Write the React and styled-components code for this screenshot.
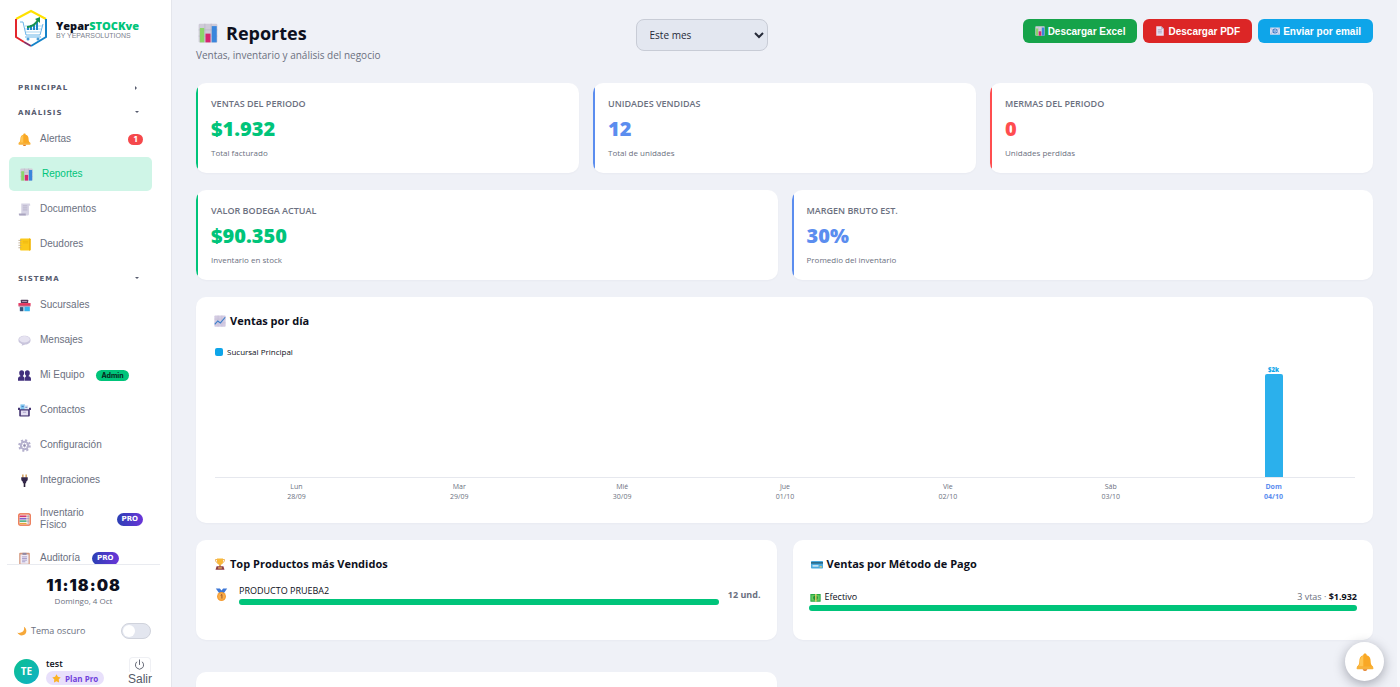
import React, { useState } from 'react';
import styled, { createGlobalStyle } from 'styled-components';
import { Power } from 'lucide-react';

const GlobalStyle = createGlobalStyle`
  :root {
    --font-ui: 'Open Sans', 'Noto Sans', sans-serif;
    --font-nav: 'Liberation Sans', Arial, sans-serif;
    --font-heavy: Inter, 'Open Sans', sans-serif;
    --font-wide: 'DejaVu Sans', Verdana, sans-serif;
    --color-green: #00c47a;
    --color-blue: #5b8def;
    --color-red: #ff4d4f;
    --color-sky: #0ea5e9;
    --color-ink: #0d1020;
    --color-muted: #6b7080;
    --color-bg: #eff1f7;
  }

  *,
  *::before,
  *::after {
    box-sizing: border-box;
  }

  body {
    margin: 0;
    background: var(--color-bg);
    color: var(--color-ink);
    font-family: var(--font-ui);
  }

  h1,
  h2,
  p,
  ul,
  ol {
    margin: 0;
    padding: 0;
  }

  ul,
  ol {
    list-style: none;
  }
`;

/* ---------- icons ---------- */

const Svg = styled.svg`
  flex: none;
  display: block;
  width: ${({ $size }) => $size}px;
  height: ${({ $size }) => $size}px;
`;

const glyphs = {
  bell: (
    <>
      <path d='M16 1c2 0 3 1 3 3 5 1 7 5 7 10 0 6 2 8 4 10v2H2v-2c2-2 4-4 4-10C6 9 8 5 13 4c0-2 1-3 3-3z' fill='#f9a825' />
      <path d='M13 5c-4 1-6 5-6 10 0 5-1 7-3 9h9z' fill='#ffc552' />
      <path d='M2 24h28l1 3c0 1-1 2-2 2H3c-1 0-2-1-2-2z' fill='#f7b23b' />
      <path d='M12 29h8c0 2-2 3-4 3s-4-1-4-3z' fill='#e37b1e' />
    </>
  ),
  chart: (
    <>
      <rect x='1' y='1' width='30' height='30' rx='2' fill='#cfcbd8' />
      <path d='M1 11h30M1 21h30M11 1v30M21 1v30' stroke='#b7b2c4' strokeWidth='1' />
      <rect x='3' y='8' width='7' height='23' fill='#8bd66a' />
      <rect x='12' y='17' width='8' height='14' fill='#d6266f' />
      <rect x='22' y='5' width='8' height='26' fill='#3a86dc' />
    </>
  ),
  scroll: (
    <>
      <path d='M8 1h20c1 0 2 1 2 3v3h-3v20c0 3-2 4-4 4H5c-2 0-3-1-3-4h6z' fill='#d6d3e4' />
      <path d='M2 26h17v2c0 2 1 3 2 3H5c-2 0-3-2-3-5z' fill='#aaa5c0' />
      <path d='M12 7h11M12 12h11M12 17h11' stroke='#b3aec6' strokeWidth='2' />
    </>
  ),
  ledger: (
    <>
      <rect x='5' y='1' width='26' height='30' rx='2' fill='#fbc91b' />
      <path d='M27 1h2c1 0 2 1 2 2v26c0 1-1 2-2 2h-2z' fill='#eeb30c' />
      <path d='M12 8h13M12 12h13' stroke='#e0a408' strokeWidth='1' />
      <path d='M1 6h7M1 12h7M1 18h7M1 24h7' stroke='#b7a58c' strokeWidth='2' />
    </>
  ),
  store: (
    <>
      <rect x='7' y='2' width='18' height='8' rx='1' fill='#51395a' />
      <path d='M10 6h12' stroke='#c9b6d0' strokeWidth='2' />
      <rect x='3' y='15' width='26' height='15' fill='#cfdce8' />
      <path d='M1 10h30v6H1z' fill='#e8365f' />
      <path d='M1 16h30v2H1z' fill='#b92850' />
      <rect x='5' y='20' width='8' height='10' fill='#36527a' />
      <rect x='16' y='19' width='13' height='11' fill='#36b3ee' />
    </>
  ),
  bubble: (
    <>
      <path d='M16 4c9 0 15 4 15 11s-6 11-13 11l-9 3 1-4C4 23 1 20 1 15 1 8 7 4 16 4z' fill='#c9c5dc' />
      <ellipse cx='16' cy='13' rx='13' ry='8' fill='#e6e3f1' />
    </>
  ),
  people: (
    <g fill='#42307d'>
      <ellipse cx='9' cy='10' rx='6' ry='7' />
      <ellipse cx='23' cy='10' rx='6' ry='7' />
      <path d='M6 14h6v4c3 1 4 3 4 6v5H0v-5c0-4 3-5 6-6z' />
      <path d='M20 14h6v4c3 1 6 2 6 6v5H17v-5c0-3 1-5 3-6z' />
    </g>
  ),
  cardbox: (
    <>
      <path d='M6 1h11v14H6z' fill='#7cc3ee' />
      <path d='M16 3h9v12h-9z' fill='#dfe3f2' />
      <path d='M9 6h5M18 8h5' stroke='#3b70b4' strokeWidth='2' />
      <path d='M0 9h5v4h22V9h5v6h-3v14c0 1-1 2-2 2H5c-1 0-2-1-2-2V15H0z' fill='#473774' />
      <path d='M7 16h18v12H7z' fill='#e4dff2' />
      <path d='M12 19h8v3h-8z' fill='#b9b0d4' />
    </>
  ),
  gear: (
    <>
      <circle cx='16' cy='16' r='13' fill='none' stroke='#b4b0cd' strokeWidth='5' strokeDasharray='5.1 5.1' />
      <circle cx='16' cy='16' r='9' fill='none' stroke='#b4b0cd' strokeWidth='5' />
      <path d='M16 8v16M9 12l14 8M23 12L9 20' stroke='#c3c0d8' strokeWidth='1.5' />
      <circle cx='16' cy='16' r='3' fill='#8e89ad' />
    </>
  ),
  plug: (
    <>
      <path d='M12 1v8M20 1v8' stroke='#c78b3a' strokeWidth='3' />
      <path d='M8 8h16v5c0 3-2 5-4 6v4h-8v-4c-2-1-4-3-4-6z' fill='#33274a' />
      <path d='M16 22v10' stroke='#2a2038' strokeWidth='4' />
    </>
  ),
  abacus: (
    <>
      <rect x='2' y='2' width='28' height='28' rx='3' fill='#fff1e8' stroke='#e8623a' strokeWidth='3' />
      <path d='M4 8h17' stroke='#d4366f' strokeWidth='4' />
      <path d='M4 14h17' stroke='#7a5fd0' strokeWidth='4' />
      <path d='M4 20h17' stroke='#4bb08a' strokeWidth='4' />
      <path d='M4 26h17' stroke='#e7a93c' strokeWidth='3' />
      <path d='M22 8h6M22 14h6M22 20h6M25 4v24' stroke='#a59ab0' strokeWidth='2' />
    </>
  ),
  clipboard: (
    <>
      <rect x='3' y='2' width='26' height='30' rx='2' fill='#d3977c' />
      <rect x='6' y='6' width='20' height='23' fill='#eeeaf5' />
      <path d='M11 2h10v5H11z' fill='#8f88a4' />
      <path d='M10 12h12M10 16h12M10 20h12M10 24h8' stroke='#9a8fc0' strokeWidth='2' />
    </>
  ),
  page: (
    <>
      <path d='M4 1h16l8 8v22H4z' fill='#e5e1f1' />
      <path d='M20 1l8 8h-8z' fill='#a7a1bb' />
      <path d='M9 12h13M9 17h13M9 22h13' stroke='#958eae' strokeWidth='2' />
    </>
  ),
  email: (
    <>
      <rect x='0' y='5' width='32' height='23' rx='2' fill='#d5dcf2' />
      <path d='M0 6l16 12L32 6M1 27l10-10M31 27L21 17' stroke='#99a5cb' strokeWidth='2' fill='none' />
      <circle cx='16' cy='16' r='8' fill='#3575c8' />
      <path d='M19 13a4 4 0 1 0 0 6M19 12v6h3' stroke='#fff' strokeWidth='2' fill='none' />
    </>
  ),
  trend: (
    <>
      <rect x='1' y='1' width='30' height='30' rx='2' fill='#d3cbe2' />
      <path d='M1 11h30M1 21h30M11 1v30M21 1v30' stroke='#bdb3d0' strokeWidth='1' />
      <path d='M2 25l8-9 7 5L30 6' stroke='#3a7fcb' strokeWidth='3' fill='none' />
    </>
  ),
  trophy: (
    <>
      <path d='M9 4H4c0 6 3 9 7 10M23 4h5c0 6-3 9-7 10' stroke='#e89b2c' strokeWidth='2' fill='none' />
      <path d='M8 1h16v8c0 6-4 9-8 9s-8-3-8-9z' fill='#f9b938' />
      <path d='M14 17h4v6h-4z' fill='#dd8a25' />
      <path d='M7 22h18l3 9H4z' fill='#8f3d44' />
      <path d='M11 25h10v3H11z' fill='#f3c15a' />
    </>
  ),
  medal: (
    <>
      <path d='M2 1h10l4 5 4-5h10l-8 11H10z' fill='#3d77d6' />
      <circle cx='16' cy='21' r='11' fill='#f59b31' />
      <circle cx='16' cy='21' r='8' fill='#fab04d' />
      <path d='M14 18l3-2v10' stroke='#8c3f1e' strokeWidth='2' fill='none' />
    </>
  ),
  card: (
    <>
      <rect x='0' y='8' width='32' height='20' rx='2' fill='#4ba9de' />
      <path d='M0 11h32v4H0z' fill='#27637f' />
      <path d='M4 19h16v4H4z' fill='#d5eaf5' />
      <path d='M23 22h6v3h-6z' fill='#f2cf5b' />
    </>
  ),
  cash: (
    <>
      <rect x='1' y='6' width='30' height='22' rx='1' fill='#27a844' />
      <rect x='4' y='9' width='24' height='16' fill='#68cd60' />
      <ellipse cx='16' cy='17' rx='7' ry='7' fill='#1d8f38' />
      <path d='M15 6h4v22h-4z' fill='#f0d467' />
    </>
  ),
  moon: (
    <path d='M22 2c3 10-2 19-17 20-2 0-3 0-4-1 3 6 8 9 14 9 9 0 15-6 15-14 0-6-3-11-8-14z' fill='#f6a83a' />
  ),
  star: (
    <path d='M16 1l5 9 10 2-7 7 1 11-9-4-9 4 1-11-7-7 10-2z' fill='#fbb224' />
  ),
};

function Emoji({ name, size = 13 }) {
  return (
    <Svg $size={size} viewBox='0 0 32 32' aria-hidden='true'>
      {glyphs[name]}
    </Svg>
  );
}

const LogoSvg = styled.svg`
  flex: none;
  width: 32px;
  height: 38px;
`;

function Logo() {
  return (
    <LogoSvg viewBox='0 0 32 38' fill='none' aria-hidden='true'>
      <path d='M1 10L16 2l15 8' stroke='#ffe100' strokeWidth='2' />
      <path d='M1 10v18l8 5' stroke='#e3262d' strokeWidth='2' />
      <path d='M9 33l7 4' stroke='#8a2f63' strokeWidth='2' />
      <path d='M31 10v18l-15 9' stroke='#1583c9' strokeWidth='2' />
      <path d='M5 13h3l3 13h14l3-11' stroke='#69b5e8' strokeWidth='1' />
      <path d='M10 17h17M10 20h16M11 23h14' stroke='#a9d5f1' strokeWidth='1' />
      <path d='M13 21v-3M16 21v-5M19 21v-6M22 21v-8' stroke='#1e87c9' strokeWidth='2' />
      <path d='M12 18c5 0 8-2 11-7' stroke='#17924e' strokeWidth='2' />
      <path d='M20 10l5-2v6z' fill='#17924e' />
      <path d='M10 28h16' stroke='#69b5e8' strokeWidth='1' />
      <circle cx='13' cy='30' r='1.5' fill='#4a9fd9' />
      <circle cx='23' cy='30' r='1.5' fill='#4a9fd9' />
    </LogoSvg>
  );
}

/* ---------- sidebar ---------- */

const Layout = styled.div`
  display: flex;
  height: 100vh;
`;

const Sidebar = styled.aside`
  flex: none;
  display: flex;
  flex-direction: column;
  width: 172px;
  background: #fff;
  border-right: 1px solid #e4e6ec;
`;

const Brand = styled.a`
  display: flex;
  align-items: center;
  gap: 9px;
  height: 79px;
  padding: 9px 15px 32px;
  color: var(--color-ink);
  text-decoration: none;
`;

const BrandText = styled.span`
  padding-top: 4px;
`;

const BrandName = styled.span`
  display: block;
  font-size: 11px;
  line-height: 12px;
  font-weight: 800;

  em {
    color: var(--color-green);
    font-style: normal;
  }
`;

const BrandBy = styled.span`
  display: block;
  font-family: var(--font-nav);
  font-size: 7px;
  line-height: 8px;
  color: #7d818e;
`;

const Nav = styled.nav`
  flex: 1;
  min-height: 0;
  overflow: hidden;
  padding: 0 19px 0 9px;
`;

const NavSection = styled.section`
  margin-bottom: 7px;
`;

const SectionToggle = styled.button`
  display: flex;
  align-items: center;
  justify-content: space-between;
  width: 100%;
  height: 18px;
  padding: 0 13px 0 9px;
  border: 0;
  background: none;
  color: #565b6e;
  font-family: var(--font-wide);
  font-size: 7px;
  font-weight: 700;
  letter-spacing: 1px;
  text-transform: uppercase;
`;

const Caret = styled.span`
  width: 0;
  height: 0;
  border: 2px solid transparent;
  border-top-color: ${({ $open }) => ($open ? '#565b6e' : 'transparent')};
  border-left-color: ${({ $open }) => ($open ? 'transparent' : '#565b6e')};
`;

const NavList = styled.ul`
  display: grid;
  gap: 1px;
  padding-bottom: 2px;
`;

const NavLink = styled.a`
  display: flex;
  align-items: center;
  min-height: 34px;
  padding: 9px;
  padding-left: ${({ $active }) => ($active ? 11 : 9)}px;
  border-radius: 5px;
  background: ${({ $active }) => ($active ? '#cff5e7' : 'transparent')};
  color: ${({ $active }) => ($active ? 'var(--color-green)' : 'var(--color-muted)')};
  font-family: var(--font-nav);
  font-size: 10px;
  line-height: 12px;
  text-decoration: none;
`;

const NavText = styled.span`
  margin-left: 9px;
`;

const CountBadge = styled.span`
  margin-left: auto;
  width: 15px;
  border-radius: 6px;
  background: #f5484b;
  color: #fff;
  font-family: var(--font-heavy);
  font-size: 8px;
  line-height: 11px;
  font-weight: 800;
  text-align: center;
`;

const TagBadge = styled.span`
  margin-left: 12px;
  padding: 0 5px;
  border-radius: 7px;
  background: ${({ $pro }) => ($pro ? 'linear-gradient(90deg, #2b3fb4, #6a35d8)' : '#00c47a')};
  color: ${({ $pro }) => ($pro ? '#fff' : '#06251a')};
  font-family: ${({ $pro }) => ($pro ? 'var(--font-wide)' : 'var(--font-heavy)')};
  font-size: 7px;
  line-height: ${({ $pro }) => ($pro ? 13 : 11)}px;
  font-weight: 700;
`;

const SidebarFooter = styled.div`
  flex: none;
  margin: 0 11px 0 7px;
  padding: 9px 0 1px;
  border-top: 1px solid #e9ebf0;
`;

const Clock = styled.p`
  font-family: var(--font-heavy);
  font-size: 16px;
  line-height: 22px;
  font-weight: 900;
  letter-spacing: 1px;
  text-align: center;
`;

const Today = styled.p`
  font-size: 8px;
  line-height: 10px;
  color: var(--color-muted);
  text-align: center;
`;

const ThemeRow = styled.label`
  display: flex;
  align-items: center;
  gap: 4px;
  margin-top: 17px;
  padding: 0 9px 0 10px;
  color: var(--color-muted);
  font-size: 9px;
  line-height: 16px;
`;

const Switch = styled.input`
  appearance: none;
  display: flex;
  align-items: center;
  width: 30px;
  height: 16px;
  margin: 0 0 0 auto;
  padding: 1px;
  border: 1px solid #d0d3dc;
  border-radius: 8px;
  background: #e3e6ef;

  &::before {
    content: '';
    width: 12px;
    height: 12px;
    border-radius: 50%;
    background: #fff;
  }

  &:checked {
    justify-content: flex-end;
    background: var(--color-green);
  }
`;

const UserRow = styled.div`
  display: flex;
  align-items: center;
  gap: 7px;
  margin-top: 17px;
  padding: 0 8px 0 7px;
  height: 30px;
`;

const Avatar = styled.span`
  flex: none;
  width: 25px;
  border-radius: 50%;
  background: linear-gradient(135deg, #0ac08f, #12b0c8);
  color: #fff;
  font-size: 10px;
  line-height: 25px;
  font-weight: 700;
  text-align: center;
`;

const UserName = styled.p`
  font-size: 9px;
  line-height: 14px;
  font-weight: 600;
`;

const PlanPill = styled.span`
  display: flex;
  align-items: center;
  gap: 4px;
  height: 14px;
  padding: 0 6px;
  border-radius: 7px;
  background: #e8e0fb;
  color: #7040dc;
  font-size: 8px;
  font-weight: 700;
`;

const LogoutButton = styled.button`
  display: flex;
  flex-direction: column;
  align-items: center;
  gap: 1px;
  margin-left: auto;
  padding: 0;
  border: 0;
  background: none;
  color: #555a68;
  font-family: var(--font-nav);
  font-size: 12px;
  line-height: 13px;
`;

const PowerBox = styled.span`
  display: grid;
  place-items: center;
  width: 22px;
  height: 15px;
  border: 1px solid #eff0f4;
  border-bottom: 0;
  border-radius: 4px 4px 0 0;
`;

/* ---------- report page ---------- */

const Main = styled.main`
  flex: 1;
  min-width: 0;
  overflow-x: hidden;
  overflow-y: auto;
  scrollbar-width: none;
  padding: 19px 24px;
  border-right: 3px solid #f6f7fb;
`;

const PageHeader = styled.header`
  display: flex;
  align-items: flex-start;
  justify-content: space-between;
  height: 64px;
`;

const PageTitle = styled.h1`
  display: flex;
  align-items: center;
  gap: 8px;
  padding-left: 2px;
  font-size: 18px;
  line-height: 28px;
  font-weight: 700;
`;

const PageSubtitle = styled.p`
  font-size: 10px;
  line-height: 17px;
  color: var(--color-muted);
`;

const PeriodSelect = styled.select`
  width: 132px;
  height: 32px;
  padding: 0 0 0 9px;
  border: 1px solid #c8ccd6;
  border-radius: 8px;
  background: #e3e7f0;
  color: #262a38;
  font-family: var(--font-ui);
  font-size: 10px;
`;

const Actions = styled.div`
  display: flex;
  gap: 6px;
`;

const ActionButton = styled.button`
  display: flex;
  align-items: center;
  gap: 3px;
  height: 24px;
  padding: 0 12px;
  border: 0;
  border-radius: 6px;
  background: ${({ $color }) => $color};
  color: #fff;
  font-family: var(--font-nav);
  font-size: 10px;
  font-weight: 700;
`;

const StatGrid = styled.section`
  display: grid;
  grid-template-columns: repeat(${({ $columns }) => $columns}, 1fr);
  gap: 14px;
  margin-bottom: 17px;
`;

const Card = styled.article`
  border-radius: 10px;
  background: #fff;
  box-shadow: 0 1px 2px rgba(20, 30, 60, 0.03);
`;

const StatCard = styled(Card)`
  padding: 13px 15px;
  background: linear-gradient(${({ $color }) => `${$color}, ${$color}`}) left / 2px 100% no-repeat #fff;
`;

const StatLabel = styled.h2`
  font-size: 9px;
  line-height: 16px;
  font-weight: 600;
  text-transform: uppercase;
  color: var(--color-muted);
`;

const StatValue = styled.p`
  font-size: 20px;
  line-height: 34px;
  font-weight: 800;
  color: ${({ $color }) => $color};
`;

const StatNote = styled.p`
  font-size: 8px;
  line-height: 14px;
  color: var(--color-muted);
`;

const Panel = styled(Card)`
  padding: 16px 18px;
`;

const PanelTitle = styled.h2`
  display: flex;
  align-items: center;
  gap: 4px;
  font-size: 11px;
  line-height: 16px;
  font-weight: 700;
`;

const ChartPanel = styled(Panel)`
  margin-bottom: 17px;
  padding-bottom: 21px;
`;

const Legend = styled.p`
  display: flex;
  align-items: center;
  gap: 4px;
  margin-top: 17px;
  padding-left: 1px;
  font-size: 8px;
  line-height: 12px;
`;

const LegendSwatch = styled.span`
  width: 8px;
  height: 8px;
  border-radius: 2px;
  background: var(--color-sky);
`;

const DayGrid = styled.ol`
  display: grid;
  grid-template-columns: repeat(7, 1fr);
  padding-left: 1px;
`;

const Plot = styled.div`
  display: flex;
  flex-direction: column;
  align-items: center;
  justify-content: flex-end;
  height: 120px;
  border-bottom: 1px solid #e6e8ee;
  color: var(--color-sky);
  font-size: 6px;
  line-height: 8px;
  font-weight: 800;
`;

const Bar = styled.div`
  width: 18px;
  border-radius: 2px 2px 0 0;
  background: #2bb0ec;
`;

const DayLabel = styled.p`
  margin-top: 4px;
  font-size: 7px;
  line-height: 10px;
  font-weight: ${({ $today }) => ($today ? 700 : 400)};
  color: ${({ $today }) => ($today ? 'var(--color-blue)' : 'var(--color-muted)')};
  text-align: center;
`;

const PanelGrid = styled.section`
  display: grid;
  grid-template-columns: 1fr 1fr;
  gap: 16px;
  margin-bottom: 32px;

  ${Panel} {
    min-height: 100px;
  }
`;

const ProductRow = styled.div`
  display: flex;
  align-items: center;
  gap: 9px;
  margin: 12px -2px 0 0;
  padding-left: 1px;
`;

const ProductInfo = styled.div`
  flex: 1;
  margin-left: 2px;
  font-size: 9px;
  line-height: 14px;
  font-weight: 500;
`;

const Units = styled.span`
  font-size: 9px;
  font-weight: 700;
  color: var(--color-muted);
`;

const Track = styled.div`
  height: 6px;
  margin-top: 1px;
  border-radius: 3px;
  background: #e8ebf2;
`;

const Fill = styled.div`
  height: 100%;
  border-radius: 3px;
  background: var(--color-green);
`;

const MethodRow = styled.div`
  margin: 18px -2px 0;
`;

const MethodLine = styled.div`
  display: flex;
  align-items: center;
  gap: 4px;
  padding-left: 1px;
  font-size: 9px;
  line-height: 14px;
  font-weight: 500;
`;

const MethodTotal = styled.span`
  margin-left: auto;
  font-weight: 400;
  color: var(--color-muted);

  strong {
    color: var(--color-ink);
  }
`;

const AlertFab = styled.button`
  position: fixed;
  right: 16px;
  bottom: 6px;
  display: grid;
  place-items: center;
  width: 39px;
  height: 39px;
  padding: 0;
  border: 0;
  border-radius: 50%;
  background: #fff;
  box-shadow: 0 3px 12px rgba(20, 24, 40, 0.35);
`;

/* ---------- data ---------- */

const sections = [
  { title: 'Principal', open: false, items: [] },
  {
    title: 'Análisis',
    open: true,
    items: [
      { label: 'Alertas', icon: 'bell', count: 1 },
      { label: 'Reportes', icon: 'chart', active: true },
      { label: 'Documentos', icon: 'scroll' },
      { label: 'Deudores', icon: 'ledger' },
    ],
  },
  {
    title: 'Sistema',
    open: true,
    items: [
      { label: 'Sucursales', icon: 'store' },
      { label: 'Mensajes', icon: 'bubble' },
      { label: 'Mi Equipo', icon: 'people', tag: 'Admin' },
      { label: 'Contactos', icon: 'cardbox' },
      { label: 'Configuración', icon: 'gear' },
      { label: 'Integraciones', icon: 'plug' },
      { label: 'Inventario Físico', icon: 'abacus', tag: 'PRO' },
      { label: 'Auditoría', icon: 'clipboard', tag: 'PRO' },
    ],
  },
];

const periodStats = [
  { label: 'Ventas del periodo', value: '$1.932', note: 'Total facturado', color: 'var(--color-green)' },
  { label: 'Unidades vendidas', value: '12', note: 'Total de unidades', color: 'var(--color-blue)' },
  { label: 'Mermas del periodo', value: '0', note: 'Unidades perdidas', color: 'var(--color-red)' },
];

const stockStats = [
  { label: 'Valor bodega actual', value: '$90.350', note: 'Inventario en stock', color: 'var(--color-green)' },
  { label: 'Margen bruto est.', value: '30%', note: 'Promedio del inventario', color: 'var(--color-blue)' },
];

const days = [
  { day: 'Lun', date: '28/09', height: 0 },
  { day: 'Mar', date: '29/09', height: 0 },
  { day: 'Mié', date: '30/09', height: 0 },
  { day: 'Jue', date: '01/10', height: 0 },
  { day: 'Vie', date: '02/10', height: 0 },
  { day: 'Sáb', date: '03/10', height: 0 },
  { day: 'Dom', date: '04/10', height: 103, amount: '$2k', today: true },
];

function NavItem({ item }) {
  const { label, icon, active, count, tag } = item;

  return (
    <li>
      <NavLink href='#' $active={active} aria-current={active ? 'page' : undefined}>
        <Emoji name={icon} />
        <NavText>{label}</NavText>
        {count && <CountBadge>{count}</CountBadge>}
        {tag && <TagBadge $pro={tag === 'PRO'}>{tag}</TagBadge>}
      </NavLink>
    </li>
  );
}

function Stats({ stats }) {
  return (
    <StatGrid $columns={stats.length}>
      {stats.map(({ label, value, note, color }) => (
        <StatCard key={label} $color={color}>
          <StatLabel>{label}</StatLabel>
          <StatValue $color={color}>{value}</StatValue>
          <StatNote>{note}</StatNote>
        </StatCard>
      ))}
    </StatGrid>
  );
}

function App() {
  const [dark, setDark] = useState(false);

  return (
    <Layout>
      <GlobalStyle />

      <Sidebar>
        <Brand href='#'>
          <Logo />
          <BrandText>
            <BrandName>
              Yepar<em>STOCKve</em>
            </BrandName>
            <BrandBy>BY YEPARSOLUTIONS</BrandBy>
          </BrandText>
        </Brand>

        <Nav>
          {sections.map(({ title, open, items }) => (
            <NavSection key={title}>
              <SectionToggle type='button' aria-expanded={open}>
                {title}
                <Caret $open={open} />
              </SectionToggle>
              {open && (
                <NavList>
                  {items.map((item) => (
                    <NavItem key={item.label} item={item} />
                  ))}
                </NavList>
              )}
            </NavSection>
          ))}
        </Nav>

        <SidebarFooter>
          <Clock>11:18:08</Clock>
          <Today>Domingo, 4 Oct</Today>
          <ThemeRow>
            <Emoji name='moon' size={10} />
            Tema oscuro
            <Switch type='checkbox' checked={dark} onChange={() => setDark(!dark)} />
          </ThemeRow>
          <UserRow>
            <Avatar>TE</Avatar>
            <div>
              <UserName>test</UserName>
              <PlanPill>
                <Emoji name='star' size={9} />
                Plan Pro
              </PlanPill>
            </div>
            <LogoutButton type='button'>
              <PowerBox>
                <Power size={11} strokeWidth={2} />
              </PowerBox>
              Salir
            </LogoutButton>
          </UserRow>
        </SidebarFooter>
      </Sidebar>

      <Main>
        <PageHeader>
          <div>
            <PageTitle>
              <Emoji name='chart' size={20} />
              Reportes
            </PageTitle>
            <PageSubtitle>Ventas, inventario y análisis del negocio</PageSubtitle>
          </div>
          <PeriodSelect aria-label='Periodo' defaultValue='mes'>
            <option value='mes'>Este mes</option>
          </PeriodSelect>
          <Actions>
            <ActionButton type='button' $color='#16a34a'>
              <Emoji name='chart' size={10} />
              Descargar Excel
            </ActionButton>
            <ActionButton type='button' $color='#dc2626'>
              <Emoji name='page' size={10} />
              Descargar PDF
            </ActionButton>
            <ActionButton type='button' $color='#0ea5e9'>
              <Emoji name='email' size={10} />
              Enviar por email
            </ActionButton>
          </Actions>
        </PageHeader>

        <Stats stats={periodStats} />
        <Stats stats={stockStats} />

        <ChartPanel>
          <PanelTitle>
            <Emoji name='trend' size={12} />
            Ventas por día
          </PanelTitle>
          <Legend>
            <LegendSwatch />
            Sucursal Principal
          </Legend>
          <DayGrid>
            {days.map(({ day, date, height, amount, today }) => (
              <li key={date}>
                <Plot>
                  {amount}
                  {height > 0 && <Bar style={{ height }} />}
                </Plot>
                <DayLabel $today={today}>
                  {day}
                  <br />
                  {date}
                </DayLabel>
              </li>
            ))}
          </DayGrid>
        </ChartPanel>

        <PanelGrid>
          <Panel>
            <PanelTitle>
              <Emoji name='trophy' size={12} />
              Top Productos más Vendidos
            </PanelTitle>
            <ProductRow>
              <Emoji name='medal' />
              <ProductInfo>
                PRODUCTO PRUEBA2
                <Track>
                  <Fill style={{ width: '100%' }} />
                </Track>
              </ProductInfo>
              <Units>12 und.</Units>
            </ProductRow>
          </Panel>

          <Panel>
            <PanelTitle>
              <Emoji name='card' size={12} />
              Ventas por Método de Pago
            </PanelTitle>
            <MethodRow>
              <MethodLine>
                <Emoji name='cash' size={11} />
                Efectivo
                <MethodTotal>
                  3 vtas · <strong>$1.932</strong>
                </MethodTotal>
              </MethodLine>
              <Track>
                <Fill style={{ width: '100%' }} />
              </Track>
            </MethodRow>
          </Panel>
        </PanelGrid>

        <PanelGrid>
          <Panel />
        </PanelGrid>
      </Main>

      <AlertFab type='button' aria-label='Alertas'>
        <Emoji name='bell' size={18} />
      </AlertFab>
    </Layout>
  );
}

export default App;
